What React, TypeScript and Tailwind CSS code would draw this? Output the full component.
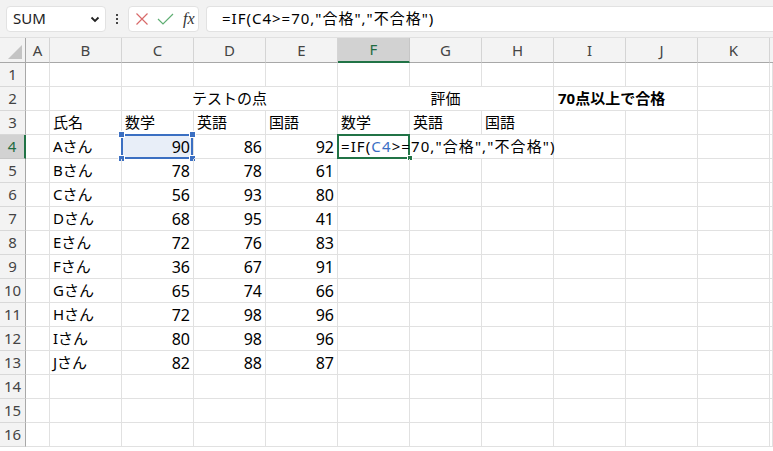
import React from "react";

const FONT = { fontFamily: '"Noto Sans", "Noto Sans CJK JP", sans-serif' };

const COLS = ["A", "B", "C", "D", "E", "F", "G", "H", "I", "J", "K"];

const DATA: [string, number, number, number][] = [
  ["Aさん", 90, 86, 92],
  ["Bさん", 78, 78, 61],
  ["Cさん", 56, 93, 80],
  ["Dさん", 68, 95, 41],
  ["Eさん", 72, 76, 83],
  ["Fさん", 36, 67, 91],
  ["Gさん", 65, 74, 66],
  ["Hさん", 72, 98, 96],
  ["Iさん", 80, 98, 96],
  ["Jさん", 82, 88, 87],
];

function Cell({
  children,
  className = "",
}: {
  children?: React.ReactNode;
  className?: string;
}) {
  return (
    <div
      className={
        "relative flex h-[24px] items-center whitespace-nowrap border-b border-r border-[#e1e1e1] text-[15px] text-black " +
        className
      }
    >
      {children}
    </div>
  );
}

function RowHead({ n, active }: { n: number; active?: boolean }) {
  return (
    <div
      className={
        "flex h-[24px] items-center justify-center border-b text-[15px] " +
        (active
          ? "border-r-2 border-b-[#c6c6c6] border-r-[#217346] bg-[#d2d2d2] text-[#1e6b41]"
          : "border-r border-b-[#d8d8d8] border-r-[#a8a8a8] bg-[#f3f3f3] text-[#444]")
      }
    >
      {n}
    </div>
  );
}

function Corner({ className }: { className: string }) {
  return (
    <span
      className={
        "absolute h-[7px] w-[7px] border border-white bg-[#3b6fc2] " + className
      }
    />
  );
}

function NameBox() {
  return (
    <div className="flex h-[26px] w-[100px] items-center justify-between rounded-[4px] border border-[#e2e2e2] bg-white pl-[6px] pr-[4px]">
      <span className="text-[15px] text-[#222]">SUM</span>
      <svg width="12" height="12" viewBox="0 0 12 12">
        <path d="M2.5 4.5 L6 8 L9.5 4.5" fill="none" stroke="#222" strokeWidth="1.8" />
      </svg>
    </div>
  );
}

function FormulaText() {
  return (
    <>
      =IF(<span className="text-[#3a6fc4]">C4</span>&gt;=70,"合格","不合格")
    </>
  );
}

export default function App() {
  return (
    <div className="h-[451px] w-[773px] overflow-hidden bg-white" style={FONT}>
      {/* formula bar */}
      <div className="flex h-[38px] items-center border-b border-[#e0e0e0] bg-[#f2f2f2] pl-[6px]">
        <NameBox />
        <div className="flex w-[22px] flex-col items-center justify-center gap-[2px]">
          <span className="h-[2px] w-[2px] bg-[#444]" />
          <span className="h-[2px] w-[2px] bg-[#444]" />
          <span className="h-[2px] w-[2px] bg-[#444]" />
        </div>
        <div className="flex h-[26px] w-[71px] items-center rounded-[4px] border border-[#e2e2e2] bg-white pl-[6px]">
          <svg width="14" height="14" viewBox="0 0 14 14">
            <path d="M1.5 1.5 L12.5 12.5 M12.5 1.5 L1.5 12.5" stroke="#d86a6a" strokeWidth="1.2" />
          </svg>
          <svg width="17" height="14" viewBox="0 0 17 14" className="ml-[8px]">
            <path d="M1 7 L6 12 L16 2" fill="none" stroke="#5fae73" strokeWidth="1.2" />
          </svg>
          <span
            className="ml-[9px] text-[16px] italic text-[#333]"
            style={{ fontFamily: '"Liberation Serif", serif' }}
          >
            fx
          </span>
        </div>
        <div className="ml-[7px] flex h-[26px] flex-1 items-center rounded-l-[4px] border border-r-0 border-[#e2e2e2] bg-white pl-[15px] text-[15px] tracking-[1px] text-black">
          =IF(C4&gt;=70,"合格","不合格")
        </div>
      </div>

      {/* sheet */}
      <div className="grid grid-cols-[26px_24px_72px_72px_72px_72px_72px_72px_72px_72px_72px_72px_1fr]">
        {/* column headers */}
        <div className="relative h-[25px] border-b border-r border-[#a8a8a8] bg-[#f3f3f3]">
          <svg width="14" height="14" viewBox="0 0 14 14" className="absolute bottom-[3px] right-[3px]">
            <path d="M14 0 L14 14 L0 14 Z" fill="#c4c4c4" />
          </svg>
        </div>
        {COLS.map((c) =>
          c === "F" ? (
            <div
              key={c}
              className="flex h-[25px] items-center justify-center border-b-2 border-r border-b-[#217346] border-r-[#c6c6c6] bg-[#d2d2d2] text-[15px] text-[#1e6b41]"
            >
              {c}
            </div>
          ) : (
            <div
              key={c}
              className="flex h-[25px] items-center justify-center border-b border-r border-b-[#a8a8a8] border-r-[#d4d4d4] bg-[#f3f3f3] text-[15px] text-[#444]"
            >
              {c}
            </div>
          )
        )}
        <div className="h-[25px] border-b border-[#a8a8a8] bg-[#f3f3f3]" />

        {/* row 1 */}
        <RowHead n={1} />
        {COLS.map((c) => (
          <Cell key={c} />
        ))}
        <Cell />

        {/* row 2 */}
        <RowHead n={2} />
        <Cell />
        <Cell />
        <Cell className="col-span-3 justify-center">テストの点</Cell>
        <Cell className="col-span-3 justify-center">評価</Cell>
        <Cell className="col-span-2 pl-[4px] font-bold">70点以上で合格</Cell>
        <Cell />
        <Cell />

        {/* row 3 */}
        <RowHead n={3} />
        <Cell />
        {["氏名", "数学", "英語", "国語", "数学", "英語", "国語"].map((t, i) => (
          <Cell key={i} className="pl-[3px]">
            {t}
          </Cell>
        ))}
        <Cell />
        <Cell />
        <Cell />
        <Cell />

        {/* data rows */}
        {DATA.map(([name, a, b, c], i) => (
          <React.Fragment key={name}>
            <RowHead n={i + 4} active={i === 0} />
            <Cell />
            <Cell className="pl-[3px]">{name}</Cell>
            {i === 0 ? (
              <Cell className="justify-end bg-[#e8eef8] pr-[3px] text-[16px]">
                <div className="absolute -left-[1px] -top-[1px] bottom-[-1px] right-0 border-2 border-[#3b6fc2]" />
                <Corner className="-left-[4px] -top-[4px]" />
                <Corner className="-right-[3px] -top-[4px]" />
                <Corner className="-bottom-[4px] -left-[4px]" />
                <Corner className="-bottom-[4px] -right-[3px]" />
                <span className="relative">{a}</span>
              </Cell>
            ) : (
              <Cell className="justify-end pr-[3px] text-[16px]">{a}</Cell>
            )}
            <Cell className="justify-end pr-[3px] text-[16px]">{b}</Cell>
            <Cell className="justify-end pr-[3px] text-[16px]">{c}</Cell>
            {i === 0 ? (
              <Cell className="col-span-3 pl-[3px] text-[15px] tracking-[1.1px]">
                <div className="absolute -left-[1px] -top-[1px] bottom-[-1px] w-[73px] border-2 border-[#217346]" />
                <span className="absolute left-[69px] bottom-[-3px] h-[6px] w-[6px] border border-white bg-[#217346]" />
                <span className="relative">
                  <FormulaText />
                </span>
              </Cell>
            ) : (
              <>
                <Cell />
                <Cell />
                <Cell />
              </>
            )}
            <Cell />
            <Cell />
            <Cell />
            <Cell />
          </React.Fragment>
        ))}

        {/* rows 14-16 */}
        {[14, 15, 16].map((n) => (
          <React.Fragment key={n}>
            <RowHead n={n} />
            {COLS.map((c) => (
              <Cell key={c} />
            ))}
            <Cell />
          </React.Fragment>
        ))}
      </div>
    </div>
  );
}
